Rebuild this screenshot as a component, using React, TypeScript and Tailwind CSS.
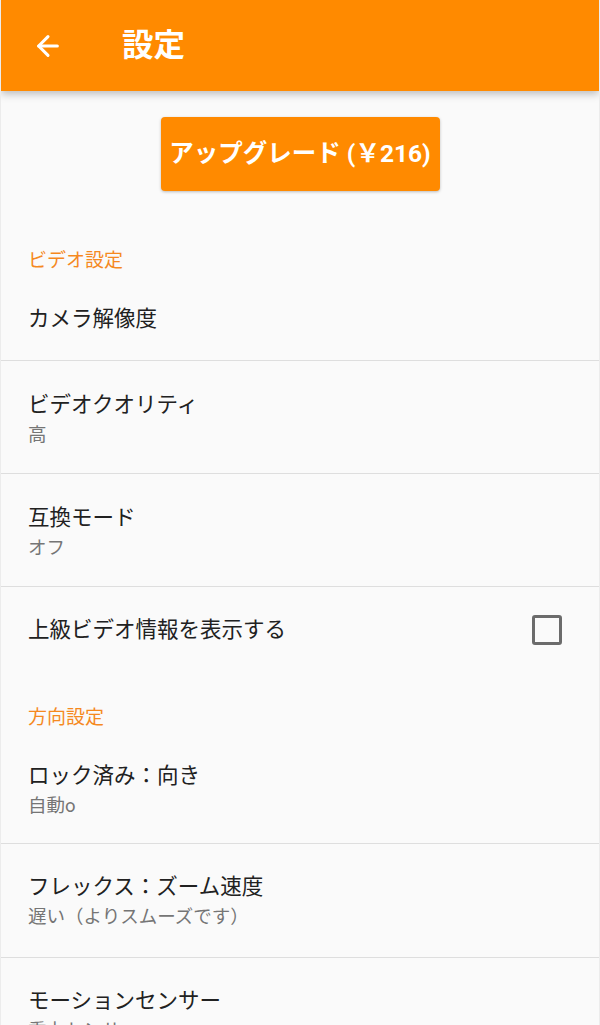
import { ArrowLeft } from 'lucide-react';

const FONT = { fontFamily: 'Roboto, "Noto Sans CJK JP", sans-serif' };

function Row({ title, sub, pt = 'pt-[29px]', h = 'h-[113px]' }: { title: string; sub: string; pt?: string; h?: string }) {
  return (
    <div className={`${h} ${pt} border-b border-[#dedede] px-[27px]`}>
      <div className="text-[21.5px] leading-[30px] text-[#212121]">{title}</div>
      <div className="text-[18.5px] leading-[30px] text-[#757575]">{sub}</div>
    </div>
  );
}

export default function App() {
  return (
    <div className="min-h-screen bg-[#fafafa] overflow-hidden border-x border-[#ececec]" style={FONT}>
      {/* アプリバー */}
      <header className="relative z-10 h-[91px] bg-[#ff8a00] flex items-center shadow-[0_3px_8px_rgba(0,0,0,0.25)]">
        <ArrowLeft className="ml-[31px] w-[32px] h-[32px] text-white" strokeWidth={2.3} />
        <h1 className="ml-[58px] text-[31.5px] font-bold text-white">設定</h1>
      </header>

      {/* アップグレード */}
      <div className="pt-[26px] flex justify-center">
        <button className="h-[74px] w-[279px] bg-[#ff8a00] rounded-[4px] text-white text-[24.5px] font-bold shadow-[0_1px_3px_rgba(0,0,0,0.25)] whitespace-nowrap">
          アップグレード (￥216)
        </button>
      </div>

      {/* ビデオ設定 */}
      <div className="pt-[55px] px-[27px] text-[19px] leading-[30px] text-[#f5891f]">ビデオ設定</div>
      <div className="h-[85px] pt-[28px] border-b border-[#dedede] px-[27px]">
        <div className="text-[21.5px] leading-[30px] text-[#212121]">カメラ解像度</div>
      </div>
      <Row title="ビデオクオリティ" sub="高" />
      <Row title="互換モード" sub="オフ" />
      <div className="h-[89px] pt-[28px] px-[27px] flex justify-between">
        <div className="text-[21.5px] leading-[30px] text-[#212121]">上級ビデオ情報を表示する</div>
        <div className="mr-[10px] w-[30px] h-[30px] border-[3px] border-[#6b6b6b] rounded-[3px]" />
      </div>

      {/* 方向設定 */}
      <div className="pt-[27px] px-[27px] text-[19px] leading-[30px] text-[#f5891f]">方向設定</div>
      <Row title="ロック済み：向き" sub="自動o" pt="pt-[28px]" h="h-[111px]" />
      <Row title="フレックス：ズーム速度" sub="遅い（よりスムーズです）" pt="pt-[28px]" h="h-[114px]" />
      <Row title="モーションセンサー" sub="重力センサー" pt="pt-[28px]" />
    </div>
  );
}
